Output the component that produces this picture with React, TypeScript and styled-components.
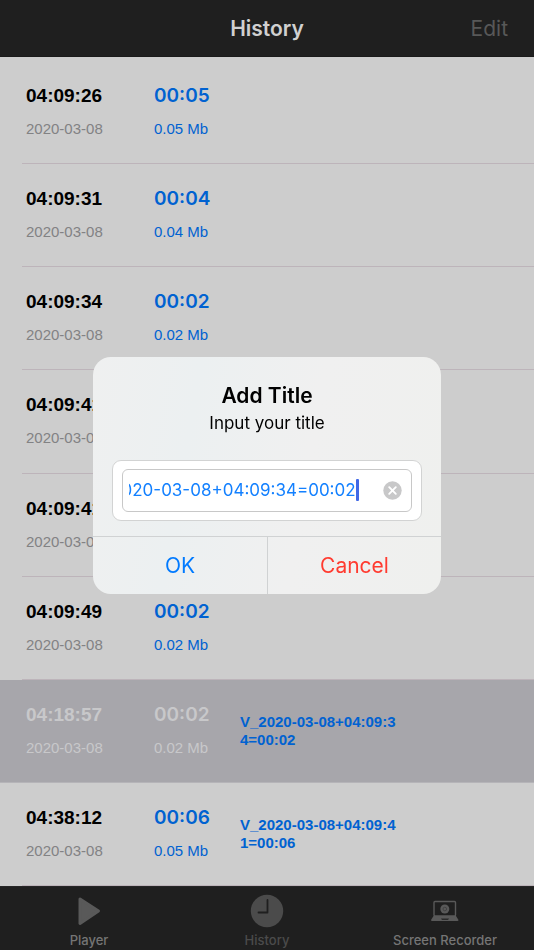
import React, { useLayoutEffect, useRef, useState } from "react";
import styled, { createGlobalStyle } from "styled-components";

const GlobalStyle = createGlobalStyle`
  *, *::before, *::after { box-sizing: border-box; }
  body { margin: 0; background: #cdcdcd; }
  button, input { font: inherit; color: inherit; background: none; border: 0; padding: 0; margin: 0; }
  button { cursor: pointer; }
  h1, h2, p, ul { margin: 0; padding: 0; font-weight: inherit; }
`;

const SANS = `Inter, "Liberation Sans", sans-serif`;
const HELV = `"Liberation Sans", Arial, sans-serif`;

const Page = styled.div`
  min-height: 100vh;
  display: flex;
  flex-direction: column;
  font-family: ${SANS};
  background: #cdcdcd;
`;

const Header = styled.header`
  display: grid;
  grid-template-columns: 1fr auto 1fr;
  align-items: center;
  height: 57px;
  padding: 2px 26px 0;
  background: #1f1f1f;
  border-bottom: 1px solid #1a1a1a;
`;

const PageTitle = styled.h1`
  grid-column: 2;
  font-size: 21px;
  line-height: 28px;
  font-weight: 600;
  color: #d0d0d0;
`;

const EditButton = styled.button`
  justify-self: end;
  font-size: 21px;
  line-height: 28px;
  color: #585858;
`;

const List = styled.ul`
  flex: 1;
  display: flex;
  flex-direction: column;
  padding-top: 4px;
  list-style: none;
`;

const Item = styled.li<{ $selected?: boolean }>`
  flex: 1 0 auto;
  display: grid;
  padding-left: ${(p) => (p.$selected ? "0" : "22px")};
  background: ${(p) => (p.$selected ? "#a7a6ab" : "transparent")};
  --time: ${(p) => (p.$selected ? "#c8c8ca" : "#000000")};
  --date: ${(p) => (p.$selected ? "#c8c8ca" : "#828284")};
  --accent: ${(p) => (p.$selected ? "#c8c8ca" : "#0062d1")};
  > div {
    padding-left: ${(p) => (p.$selected ? "26px" : "4px")};
    border-bottom-color: ${(p) => (p.$selected ? "#b5b4b8" : "#bdb4ba")};
  }
`;

const ItemBody = styled.div`
  display: grid;
  grid-template-columns: 128px 86px 162px;
  align-items: center;
  min-height: 96px;
  border-bottom: 1px solid;
`;

const Cell = styled.div`
  display: flex;
  flex-direction: column;
  gap: 12px;
  white-space: nowrap;
`;

const Time = styled.span`
  font: 700 19px/22px ${HELV};
  color: var(--time);
`;

const DateText = styled.span`
  font: 400 15px/20px ${HELV};
  color: var(--date);
`;

const Duration = styled.span`
  font: 600 19px/22px ${SANS};
  color: var(--accent);
`;

const Size = styled.span`
  font: 400 15px/20px ${HELV};
  color: var(--accent);
`;

const Name = styled.p`
  font: 700 15px/18px ${HELV};
  color: #0062d1;
  word-break: break-all;
`;

const TabBar = styled.nav`
  display: grid;
  grid-template-columns: repeat(3, 1fr);
  height: 64px;
  background: #1f1f1f;
  border-top: 1px solid #262626;
`;

const Tab = styled.button<{ $active?: boolean }>`
  display: flex;
  flex-direction: column;
  align-items: center;
  padding-top: 6px;
  gap: 2px;
  font-size: 13px;
  line-height: 18px;
  font-weight: 500;
  color: ${(p) => (p.$active ? "#4b4b4b" : "#757575")};
  svg { display: block; color: ${(p) => (p.$active ? "#4b4b4b" : "#595959")}; }
`;

const Overlay = styled.div`
  position: fixed;
  inset: 0;
  display: flex;
  align-items: center;
  justify-content: center;
  padding: 16px;
`;

const Dialog = styled.div`
  width: 100%;
  max-width: 348px;
  border-radius: 18px;
  overflow: hidden;
  background: linear-gradient(100deg, #eff0f0 0%, #ecf0f1 28%, #f0f0f0 60%, #eff0ee 100%);
  text-align: center;
  color: #000;
`;

const DialogBody = styled.div`
  padding: 24px 19px 15px;
`;

const DialogTitle = styled.h2`
  font-size: 21px;
  line-height: 30px;
  font-weight: 600;
`;

const DialogText = styled.label`
  display: block;
  font-size: 17px;
  line-height: 24px;
`;

const FieldFrame = styled.div`
  margin-top: 25px;
  padding: 8px 9px;
  background: #fff;
  border: 1px solid #d2d3d3;
  border-radius: 9px;
`;

const Field = styled.div`
  display: flex;
  align-items: center;
  height: 43px;
  padding: 0 9px 0 6px;
  border: 1px solid #c8c8c8;
  border-radius: 6px;
`;

const FieldInput = styled.input`
  flex: 1;
  min-width: 0;
  height: 24px;
  font-size: 17px;
  line-height: 24px;
  color: #1380ff;
  caret-color: transparent;
  outline: none;
`;

const Caret = styled.span`
  width: 3px;
  height: 22px;
  border-radius: 1px;
  background: #4169e6;
`;

const ClearButton = styled.button`
  display: flex;
  margin-left: 24px;
  svg { display: block; }
`;

const Actions = styled.div`
  display: grid;
  grid-template-columns: 1fr 1fr;
  border-top: 1px solid #d0d2d3;
`;

const Action = styled.button<{ $danger?: boolean }>`
  height: 57px;
  padding-top: 2px;
  font-size: 21px;
  line-height: 28px;
  color: ${(p) => (p.$danger ? "#ff3b30" : "#007aff")};
  & + & { border-left: 1px solid #d0d2d3; }
`;

interface Recording {
  time: string;
  duration: string;
  size: string;
  name?: string;
  selected?: boolean;
}

const recordings: Recording[] = [
  { time: "04:09:26", duration: "00:05", size: "0.05 Mb" },
  { time: "04:09:31", duration: "00:04", size: "0.04 Mb" },
  { time: "04:09:34", duration: "00:02", size: "0.02 Mb" },
  { time: "04:09:41", duration: "00:06", size: "0.05 Mb" },
  { time: "04:09:41", duration: "00:02", size: "0.02 Mb" },
  { time: "04:09:49", duration: "00:02", size: "0.02 Mb" },
  { time: "04:18:57", duration: "00:02", size: "0.02 Mb", name: "V_2020-03-08+04:09:34=00:02", selected: true },
  { time: "04:38:12", duration: "00:06", size: "0.05 Mb", name: "V_2020-03-08+04:09:41=00:06" },
];

const PlayIcon = () => (
  <svg width="36" height="36" viewBox="0 0 36 36" aria-hidden="true">
    <path d="M9 6 L27.5 18 L9 30.500 Z" fill="currentColor" stroke="currentColor" strokeWidth="3" strokeLinejoin="round" />
  </svg>
);

const ClockIcon = () => (
  <svg width="36" height="36" viewBox="0 0 36 36" aria-hidden="true">
    <circle cx="18" cy="18" r="16.200" fill="currentColor" />
    <path d="M18.500 7 V19.500 H9.500" fill="none" stroke="#1f1f1f" strokeWidth="1.800" strokeLinecap="round" strokeLinejoin="round" />
  </svg>
);

const LaptopIcon = () => (
  <svg width="36" height="36" viewBox="0 0 36 36" aria-hidden="true">
    <rect x="7" y="8.500" width="21.500" height="14.500" rx="1" fill="none" stroke="currentColor" strokeWidth="1.400" />
    <circle cx="17.800" cy="16" r="4.500" fill="currentColor" />
    <circle cx="17.800" cy="16" r="1.800" fill="none" stroke="#424242" strokeWidth="1" />
    <path d="M6.500 23 H29 L31.500 27 Q31.500 28 30.500 28 H5 Q4 28 4 27 Z" fill="currentColor" />
    <path d="M14 25.500 H22 L21 27 H15 Z" fill="#2a2a2a" />
  </svg>
);

const ClearIcon = () => (
  <svg width="19" height="19" viewBox="0 0 19 19" aria-hidden="true">
    <circle cx="9.500" cy="9.500" r="9.200" fill="#c8c8c9" />
    <path d="M6.200 6.200 L12.800 12.800 M12.800 6.200 L6.200 12.800" stroke="#fff" strokeWidth="1.900" strokeLinecap="round" />
  </svg>
);

export default function App() {
  const [title, setTitle] = useState("V_2020-03-08+04:09:34=00:02");
  const inputRef = useRef<HTMLInputElement>(null);

  useLayoutEffect(() => {
    const el = inputRef.current;
    if (!el) return;
    el.focus();
    el.setSelectionRange(el.value.length, el.value.length);
    el.scrollLeft = el.scrollWidth;
  }, []);

  return (
    <Page>
      <GlobalStyle />
      <Header>
        <PageTitle>History</PageTitle>
        <EditButton type="button">Edit</EditButton>
      </Header>
      <List>
        {recordings.map((r, i) => (
          <Item key={i} $selected={r.selected}>
            <ItemBody>
              <Cell>
                <Time>{r.time}</Time>
                <DateText>2020-03-08</DateText>
              </Cell>
              <Cell>
                <Duration>{r.duration}</Duration>
                <Size>{r.size}</Size>
              </Cell>
              {r.name && <Name>{r.name}</Name>}
            </ItemBody>
          </Item>
        ))}
      </List>
      <TabBar>
        <Tab type="button"><PlayIcon />Player</Tab>
        <Tab type="button" $active aria-current="page"><ClockIcon />History</Tab>
        <Tab type="button"><LaptopIcon />Screen Recorder</Tab>
      </TabBar>
      <Overlay>
        <Dialog role="dialog" aria-modal="true" aria-labelledby="dialog-title">
          <DialogBody>
            <DialogTitle id="dialog-title">Add Title</DialogTitle>
            <DialogText htmlFor="title-input">Input your title</DialogText>
            <FieldFrame>
              <Field>
                <FieldInput
                  id="title-input"
                  ref={inputRef}
                  type="text"
                  spellCheck={false}
                  value={title}
                  onChange={(e) => setTitle(e.target.value)}
                />
                <Caret />
                <ClearButton type="button" aria-label="Clear text" onClick={() => setTitle("")}>
                  <ClearIcon />
                </ClearButton>
              </Field>
            </FieldFrame>
          </DialogBody>
          <Actions>
            <Action type="button">OK</Action>
            <Action type="button" $danger>Cancel</Action>
          </Actions>
        </Dialog>
      </Overlay>
    </Page>
  );
}
